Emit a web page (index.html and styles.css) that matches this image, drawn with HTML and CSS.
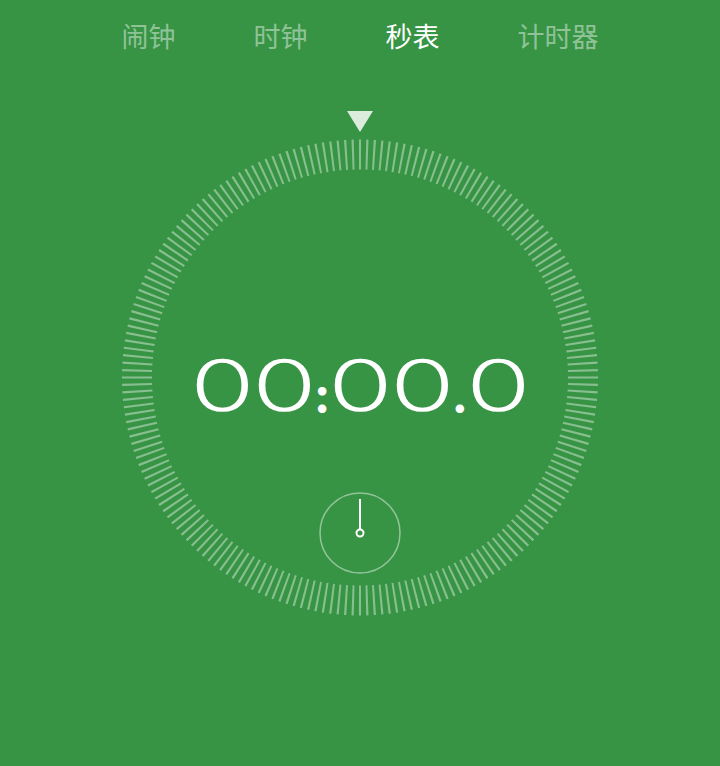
FILE: index.html
```html
<!DOCTYPE html>
<html lang="zh">
<head>
<meta charset="utf-8">
<title>秒表</title>
<link rel="stylesheet" href="styles.css">
</head>
<body>
<nav class="tabs">
  <span class="tab">闹钟</span>
  <span class="tab">时钟</span>
  <span class="tab active">秒表</span>
  <span class="tab">计时器</span>
</nav>
<main class="dial">
  <svg class="dial-art" width="480" height="510" viewBox="0 0 480 510">
    <polygon points="227,3 253,3 240,24" class="pointer"/>
    <circle class="ticks" cx="240" cy="269.5" r="223" pathLength="200"/>
    <g class="time">
      <text class="d" transform="translate(102.5 302) scale(1.55 1)">0</text>
      <text class="d" transform="translate(164.5 302) scale(1.55 1)">0</text>
      <text class="sep" x="202" y="303">:</text>
      <text class="d" transform="translate(240.5 302) scale(1.55 1)">0</text>
      <text class="d" transform="translate(302.5 302) scale(1.55 1)">0</text>
      <text class="sep" x="340" y="303">.</text>
      <text class="d" transform="translate(378.5 302) scale(1.55 1)">0</text>
    </g>
    <circle class="sub-ring" cx="240" cy="425" r="40"/>
    <line class="sub-hand" x1="240" y1="391" x2="240" y2="421"/>
    <circle class="sub-hub" cx="240" cy="425" r="3.5"/>
  </svg>
</main>
</body>
</html>
```
FILE: styles.css
```css
html, body {
  margin: 0;
  padding: 0;
}
body {
  width: 720px;
  height: 766px;
  background: #389445;
  overflow: hidden;
  font-family: "Noto Sans CJK SC", "Noto Sans", sans-serif;
}
.tabs {
  display: flex;
  justify-content: center;
  gap: 78px;
  padding-top: 22px;
  height: 54px;
}
.tab {
  font-size: 27px;
  line-height: 27px;
  color: rgba(255, 255, 255, 0.45);
}
.tab.active {
  color: #ffffff;
}
.dial {
  width: 480px;
  height: 510px;
  margin: 32px auto 0;
}
.dial-art {
  display: block;
}
.pointer {
  fill: rgba(255, 255, 255, 0.82);
}
.ticks {
  fill: none;
  stroke: rgba(255, 255, 255, 0.4);
  stroke-width: 30;
  stroke-dasharray: 0.3 0.7;
  stroke-dashoffset: 0.15;
}
.time {
  fill: #ffffff;
  stroke: #ffffff;
  text-anchor: middle;
}
.d {
  font-family: "Inter", "Roboto", sans-serif;
  font-weight: 100;
  font-size: 68px;
  stroke-width: 3.5;
  vector-effect: non-scaling-stroke;
  stroke-linejoin: round;
}
.sep {
  font-family: "Roboto", sans-serif;
  font-weight: 400;
  font-size: 40px;
  stroke-width: 4;
  stroke-linejoin: round;
}
.sub-ring {
  fill: none;
  stroke: rgba(255, 255, 255, 0.45);
  stroke-width: 1.5;
}
.sub-hand {
  stroke: #ffffff;
  stroke-width: 2;
}
.sub-hub {
  fill: none;
  stroke: #ffffff;
  stroke-width: 2;
}
```
